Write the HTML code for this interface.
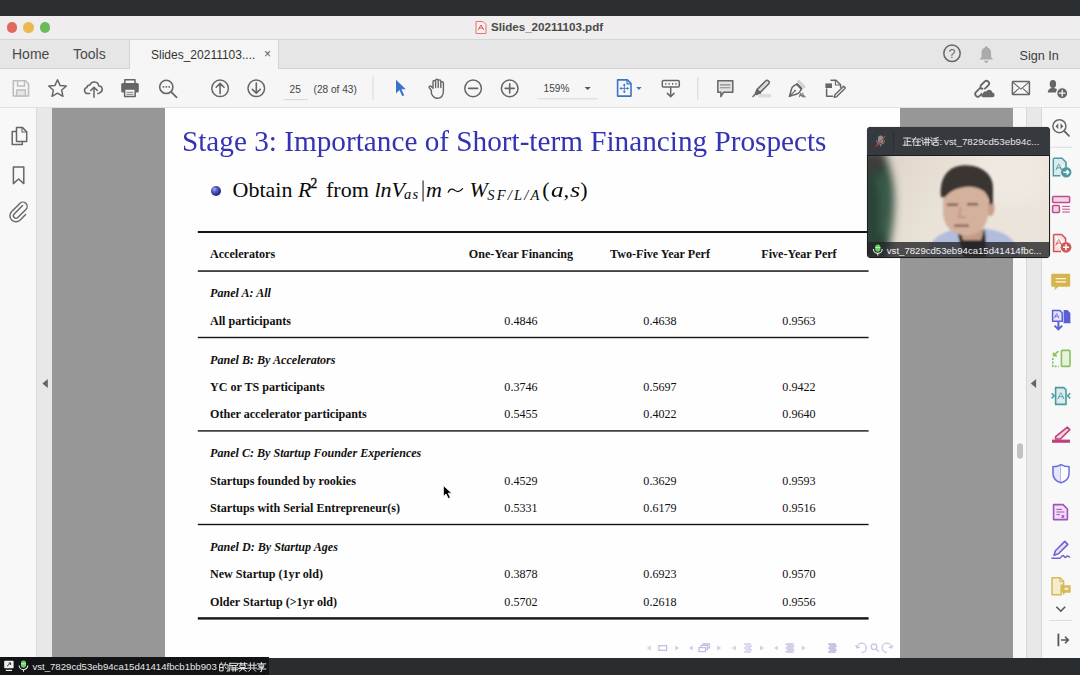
<!DOCTYPE html>
<html><head><meta charset="utf-8">
<style>
*{margin:0;padding:0;box-sizing:border-box}
html,body{width:1080px;height:675px;overflow:hidden;background:#2b2e31;font-family:"Liberation Sans",sans-serif}
.a{position:absolute}
svg{position:absolute;overflow:visible}
#topbar{left:0;top:0;width:1080px;height:16px;background:#2b2e31}
#titlebar{left:0;top:16px;width:1080px;height:24px;background:#efedee;border-bottom:1px solid #d6d4d5}
.tl{width:10.5px;height:10.5px;border-radius:50%;top:22.2px}
#tabbar{left:0;top:40px;width:1080px;height:29px;background:#e6e6e6;border-bottom:1px solid #d2d2d2}
#acttab{left:128.5px;top:40px;width:150px;height:29px;background:#f5f5f5;border-left:1px solid #d2d2d2;border-right:1px solid #d2d2d2}
#toolbar{left:0;top:69px;width:1080px;height:39px;background:#f6f6f6;border-bottom:1px solid #e0e0e0}
#content{left:0;top:108px;width:1080px;height:550px;background:#979797}
#leftpanel{left:0;top:108px;width:37px;height:550px;background:#f8f8f8;border-right:1px solid #dadada}
#leftstrip{left:37px;top:108px;width:15px;height:550px;background:#e8e8e8}
#page{left:165px;top:108px;width:735.4px;height:550px;background:#fefefe}
#rstrip1{left:1013px;top:108px;width:14px;height:550px;background:#f7f7f7}
#rstrip2{left:1025.8px;top:108px;width:16.2px;height:550px;background:#e8e8e8;border-left:1px solid #d8d8d8;border-right:1px solid #d8d8d8}
#rightpanel{left:1042px;top:108px;width:38px;height:550px;background:#f8f8f8}
#bottombar{left:0;top:658px;width:1080px;height:17px;background:#2a2d30}
#bbox{left:0;top:657px;width:268.5px;height:18px;background:#131416}
.serif{font-family:"Liberation Serif",serif}
.tb,.tn,.ti{position:absolute;font-family:"Liberation Serif",serif;font-size:12.1px;color:#111;white-space:nowrap;line-height:14px}
.tb{font-weight:bold}
.ti{font-weight:bold;font-style:italic}
.rule{position:absolute;left:198px;width:670.6px;height:1.4px;background:#141414}
.c1,.c2,.c3{width:120px;text-align:center}
.c1{left:461px}.c2{left:600px}.c3{left:739px}
.ui{position:absolute;white-space:nowrap;line-height:1;color:#444}
</style></head><body>
<div class="a" id="topbar"></div>
<div class="a" id="titlebar"></div>
<div class="a tl" style="left:6.5px;background:#e2675d"></div>
<div class="a tl" style="left:23px;background:#e9b84f"></div>
<div class="a tl" style="left:39.8px;background:#6cbb5a"></div>
<!-- pdf icon title -->
<svg style="left:475px;top:21px" width="12" height="13" viewBox="0 0 12 13"><path d="M1 0.5h7l3 3v9H1z" fill="#fbeeee" stroke="#d9776f" stroke-width="1"/><path d="M3 9 L6 4 L9 9 M4 7h4" fill="none" stroke="#d04a3c" stroke-width="0.9"/></svg>
<div class="ui" style="left:491px;top:21px;font-size:11.6px;font-weight:bold;color:#4a4a4a">Slides_20211103.pdf</div>

<div class="a" id="tabbar"></div>
<div class="a" id="acttab"></div>
<div class="ui" style="left:12px;top:46.5px;font-size:14px;color:#4a4a4a">Home</div>
<div class="ui" style="left:73px;top:46.5px;font-size:14px;color:#4a4a4a">Tools</div>
<div class="ui" style="left:151px;top:49px;font-size:12px;color:#333">Slides_20211103....</div>
<div class="ui" style="left:264px;top:47.5px;font-size:12px;color:#555">&#215;</div>
<div class="ui" style="left:1019.5px;top:50px;font-size:12.6px;color:#3c3c3c">Sign In</div>

<div class="a" id="toolbar"></div>
<div class="a" id="content"></div>
<div class="a" id="leftpanel"></div>
<div class="a" id="leftstrip"></div>
<div class="a" id="page"></div>
<div class="a" id="rstrip1"></div>
<div class="a" id="rstrip2"></div>
<div class="a" id="rightpanel"></div>
<div class="a" id="bottombar"></div>
<div class="a" id="bbox"></div>

<!--PANELS-->
<svg style="left:0;top:0" width="1080" height="675" viewBox="0 0 1080 675">
<g fill="none" stroke="#666" stroke-width="1.5" stroke-linejoin="round" stroke-linecap="round">
<!-- left: pages -->
<path d="M16.5 127.4h5.8l4.4 4.4v9.6h-10.2z"/>
<path d="M22 127.6v4.4h4.5" stroke-width="1.1"/>
<path d="M16.3 131.6h-4.1v12.8h10.1v-3"/>
<!-- bookmark -->
<path d="M13.4 167h10.4v16.6l-5.2-4.6-5.2 4.6z"/>
<!-- paperclip -->
<path d="M22.6 207.6l-8.4 8.4a2.5 2.5 0 0 0 3.6 3.6l8.1-8.1a4.3 4.3 0 0 0-6.1-6.1l-8.1 8.1a6 6 0 0 0 8.5 8.5l5.4-5.4" stroke-width="1.4" transform="translate(0,-2)"/>
<!-- right: zoom -->
<circle cx="1059.4" cy="126.2" r="6.5"/>
<path d="M1064.2 131l4.8 4.8" stroke-width="1.8"/>
</g>
<path d="M1058.3 123.2l-2.8 3 2.8 3zM1060.5 123.2l2.8 3-2.8 3z" fill="#666"/>
<rect x="1050.5" y="146.8" width="22" height="1" fill="#dcdcdc"/>
<!-- export pdf teal -->
<path d="M1053.4 158.2h8.6l4 4v5" fill="#dcecec" stroke="#4b9a9f" stroke-width="1.6" stroke-linejoin="round"/>
<path d="M1053.4 158.2v17.5h7" fill="none" stroke="#4b9a9f" stroke-width="1.6"/>
<rect x="1054.2" y="159" width="8" height="16" fill="#dcecec"/>
<path d="M1055.8 170.2C1057.6 167.2 1058.2 164.2 1058.8 164.2C1059.4 164.2 1060.0 167.2 1061.8 170.2M1056.1 168.5C1058.2 167.5 1059.4 167.5 1061.5 168.5" fill="none" stroke="#4b9a9f" stroke-width="0.9"/>
<circle cx="1066.2" cy="172.2" r="5.2" fill="#4b9a9f"/>
<path d="M1063.4 172.2h5M1066.6 170l2.2 2.2-2.2 2.2" fill="none" stroke="#fff" stroke-width="1.4"/>
<!-- organize pink -->
<rect x="1052.6" y="196.4" width="17" height="6.2" rx="1.2" fill="#efd7e6" stroke="#c2498a" stroke-width="1.5"/>
<rect x="1052.6" y="205.6" width="6.8" height="7" rx="1.2" fill="#efd7e6" stroke="#c2498a" stroke-width="1.5"/>
<path d="M1062.2 206.4h7.6M1062.2 209.2h7.6M1062.2 212h7.6" stroke="#c2498a" stroke-width="1"/>
<!-- create pdf red -->
<path d="M1053.6 234.4h8l4 4v3.5M1053.6 234.4v17.2h7.4" fill="#f6e2e2" stroke="#d05555" stroke-width="1.5"/>
<path d="M1055.8 245.4C1057.6 242.4 1058.2 239.4 1058.8 239.4C1059.4 239.4 1060.0 242.4 1061.8 245.4M1056.1 243.7C1058.2 242.7 1059.4 242.7 1061.5 243.7" fill="none" stroke="#d05555" stroke-width="0.9"/>
<circle cx="1066" cy="247.3" r="5.4" fill="#d05555"/>
<path d="M1063 247.3h6M1066 244.3v6" stroke="#fff" stroke-width="1.5"/>
<!-- comment yellow -->
<path d="M1052.4 273.8h16.6a1.2 1.2 0 0 1 1.2 1.2v10.5a1.2 1.2 0 0 1-1.2 1.2h-10.8l-3.5 3.5v-3.5h-2.3a1.2 1.2 0 0 1-1.2-1.2v-10.5a1.2 1.2 0 0 1 1.2-1.2z" fill="#d6b54e"/>
<path d="M1055.6 278.6h10.4M1055.6 281.8h10.4" stroke="#fff6d8" stroke-width="1.3"/>
<!-- combine blue -->
<path d="M1052.6 310.4h7.2l2.4 2.4v8.4h-9.6z" fill="#e4e4fa" stroke="#5b5fd6" stroke-width="1.5"/>
<path d="M1054.4 318.2C1055.8 315.9 1056.2 313.6 1056.7 313.6C1057.2 313.6 1057.6 315.9 1059.0 318.2M1054.6 316.9C1056.2 316.1 1057.2 316.1 1058.8 316.9" fill="none" stroke="#5b5fd6" stroke-width="0.8"/>
<path d="M1063.6 310h3.8l3 3v10.2h-6.8z" fill="#5b5fd6"/>
<path d="M1058.4 321v7.4M1054.6 325.6l3.8 3.8 3.8-3.8" fill="none" stroke="#5b5fd6" stroke-width="2"/>
<!-- organize pages green -->
<rect x="1061.4" y="350.4" width="8.6" height="16" rx="1" fill="#e6f2dc" stroke="#8ac15f" stroke-width="1.6"/>
<path d="M1052.8 358v8.4h6" fill="none" stroke="#8ac15f" stroke-width="1.6" stroke-dasharray="2 1.4"/>
<path d="M1058.4 351l-4.6 4.6M1053.6 352.4v3.4h3.4" fill="none" stroke="#8ac15f" stroke-width="1.6"/>
<!-- compress teal -->
<path d="M1055.6 387.6h8.2l2.2 2.2v14.6h-10.4z" fill="#dcecec" stroke="#4b9a9f" stroke-width="1.6" stroke-linejoin="round"/>
<path d="M1057.8 399.0C1059.7 395.9 1060.3 392.8 1060.9 392.8C1061.5 392.8 1062.1 395.9 1064.0 399.0M1058.1 397.3C1060.3 396.2 1061.5 396.2 1063.7 397.3" fill="none" stroke="#4b9a9f" stroke-width="0.9"/>
<path d="M1051.6 393.2l2.6 2.6-2.6 2.6M1070.2 393.2l-2.6 2.6 2.6 2.6" fill="none" stroke="#4b9a9f" stroke-width="1.5"/>
<!-- redact pink -->
<path d="M1067.4 427.2l2.4 2.4-9.4 9.4h-4.8v-2.4z" fill="#f0d2e0" stroke="#c2407a" stroke-width="1.6" stroke-linejoin="round"/>
<rect x="1052" y="439.6" width="18" height="3.2" fill="#c2407a"/>
<!-- shield -->
<path d="M1061 464.6c2.6 1.6 5.4 2.2 8 2.2v6.6c0 4.8-3.4 7.8-8 9.4-4.6-1.6-8-4.6-8-9.4v-6.6c2.6 0 5.4-.6 8-2.2z" fill="#e6e6fa" stroke="#6a6fe0" stroke-width="1.6"/>
<path d="M1061 465.2v17" stroke="#6a6fe0" stroke-width="0.8"/>
<path d="M1061 465.6c2.4 1.4 5 2 7.2 2v5.8c0 4.2-3 7-7.2 8.4z" fill="#fafaff"/>
<!-- form purple -->
<path d="M1053.6 504.6h9.4l4.4 4.4v10.6h-13.8z" fill="#f0e0f4" stroke="#a24fc0" stroke-width="1.6" stroke-linejoin="round"/>
<path d="M1056.4 509.4h5.6M1056.4 512h8M1056.4 514.6h3.6" stroke="#a24fc0" stroke-width="1"/>
<path d="M1061.6 515.2l2.6 2.6M1064.2 515.2l-2.6 2.6" stroke="#a24fc0" stroke-width="1.1"/>
<!-- sign purple -->
<path d="M1064.8 541.4l3 3-9.4 9.4-4.4 1.4 1.4-4.4z" fill="#e8e4fa" stroke="#7060d2" stroke-width="1.6" stroke-linejoin="round"/>
<path d="M1051.4 558.2h8.4c1.6 0 1.8-2.8 3.2-2.8 1.2 0 1 2 2.2 2 1 0 1.2-1.4 2.2-1.4.8 0 1 1 2.8 1" fill="none" stroke="#7060d2" stroke-width="1.5"/>
<!-- send for comment yellow -->
<path d="M1052 577.8h8l3.6 3.6v3.8h-2.4v9.6h-9.2z" fill="#f4eccc" stroke="#d4bb55" stroke-width="1.5" stroke-linejoin="round"/>
<path d="M1059.8 578v3.6h3.6" fill="none" stroke="#d4bb55" stroke-width="1"/>
<path d="M1062 585.2h8.6v7.6h-5.4l-2.2 2.4v-2.4h-1z" fill="#d4bb55"/>
<rect x="1064.6" y="587.6" width="3.6" height="2.4" fill="#f4eccc"/>
<!-- chevron -->
<path d="M1056.4 606.8l4.4 4.4 4.4-4.4" fill="none" stroke="#555" stroke-width="1.6"/>
<rect x="1049.5" y="620" width="23" height="1" fill="#dcdcdc"/>
<!-- exit arrow -->
<path d="M1058.4 633.6v12.6" stroke="#555" stroke-width="1.8"/>
<path d="M1061 640h7.2M1065 636.8l3.3 3.2-3.3 3.2" fill="none" stroke="#555" stroke-width="1.6"/>
<!-- collapse arrows -->
<path d="M47.8 379v9l-5.4-4.5z" fill="#666"/>
<path d="M1036.1 379v9l-5.3-4.5z" fill="#666"/>
<rect x="1017" y="443.3" width="6" height="15.4" rx="3" fill="#c2c2c2"/>
<!-- mouse cursor -->
<path d="M443.4 485.6v10.8l2.6-2.4 2.3 4.6 2.1-1-2.2-4.4h3.6z" fill="#000" stroke="#fff" stroke-width="0.8" stroke-linejoin="round"/>
</svg>
<!--/PANELS-->
<!--TOOLBAR-->
<svg style="left:0;top:0" width="1080" height="675" viewBox="0 0 1080 675">
<g fill="none" stroke="#666" stroke-width="1.6" stroke-linejoin="round" stroke-linecap="round">
<!-- save -->
<path d="M13.3 80.8h12.2l3 3v12.2h-15.2z" stroke="#bdbdbd"/>
<path d="M17.5 81v5h7v-5" stroke="#bdbdbd" stroke-width="1.4"/>
<rect x="16.6" y="90" width="8.8" height="5.8" fill="#e4e4e4" stroke="#bdbdbd" stroke-width="1.3"/>
<!-- star -->
<path d="M57.5 79.8l2.55 5.6 6.2.65-4.65 4.15 1.35 6.1-5.45-3.15-5.45 3.15 1.35-6.1-4.65-4.15 6.2-.65z" stroke-width="1.5"/>
<!-- cloud up -->
<path d="M89.6 93.4h-1.2a3 3 0 0 1-1.6-5.9 3.2 3.2 0 0 1 3.2-2.6 4.6 4.6 0 0 1 8.8 1 3.4 3.4 0 0 1 1.2 6.6 3.2 3.2 0 0 1-1.2.9h-1" stroke-width="1.5"/>
<path d="M94 97.2v-9.6M90.8 90.4l3.2-3.2 3.2 3.2" stroke-width="1.5"/>
<!-- printer -->
<path d="M124.8 83v-3.2h10.2v3.2" stroke-width="1.5"/>
<rect x="121.2" y="83" width="17.6" height="9.6" rx="1.6" fill="#666" stroke="none"/>
<rect x="124.6" y="89" width="10.6" height="7.4" fill="#f6f6f6" stroke-width="1.5"/>
<path d="M126.8 92.3h6.2M126.8 94.3h6.2" stroke-width="0.8"/>
<!-- search -->
<circle cx="166.3" cy="86.9" r="6.6" stroke-width="1.6"/>
<path d="M171.2 91.8l5.4 5.6" stroke-width="1.8"/>
<path d="M163.3 86.9h.3M166.2 86.9h.3M169.1 86.9h.3" stroke-width="1.6"/>
<!-- up / down -->
<circle cx="220.1" cy="88.3" r="8.3" stroke-width="1.5"/>
<path d="M220.1 93.6v-10M216.2 87.2l3.9-3.9 3.9 3.9" stroke-width="1.6"/>
<circle cx="256.3" cy="88.3" r="8.3" stroke-width="1.5"/>
<path d="M256.3 83v10M252.4 89.4l3.9 3.9 3.9-3.9" stroke-width="1.6"/>
<!-- hand -->
<path d="M431.4 90.5l-2.1-2.6a1.2 1.2 0 0 1 1.6-1.7l2.1 2V81.8a1.3 1.3 0 0 1 2.6 0v5.8-7.1a1.3 1.3 0 0 1 2.6 0v7.1-6.4a1.3 1.3 0 0 1 2.6 0v6.4-4.6a1.3 1.3 0 0 1 2.6 0v7.8c0 5.2-2.6 7.5-6.2 7.5-2.6 0-4.1-1.2-5.8-4.8z" stroke-width="1.4"/>
<!-- zoom out / in -->
<circle cx="473.1" cy="88.4" r="8.3" stroke-width="1.5"/>
<path d="M468.6 88.4h9" stroke-width="1.6"/>
<circle cx="509.7" cy="88.4" r="8.3" stroke-width="1.5"/>
<path d="M505.2 88.4h9M509.7 83.9v9" stroke-width="1.6"/>
<!-- measure -->
<rect x="662.3" y="80.6" width="17" height="6.4" rx="1.3" stroke-width="1.5"/>
<path d="M665.2 83.8h1.2M668.6 83.8h1.2M672 83.8h1.2M675.4 83.8h1.2" stroke-width="1.8" stroke-linecap="butt"/>
<path d="M670.7 87.6v9M667.4 93.4l3.3 3.3 3.3-3.3" stroke-width="1.5"/>
<!-- comment -->
<path d="M717.8 80.8h15v11.5h-9.3l-2.6 4.3v-4.3h-3.1z" fill="#e2e2e2" stroke-width="1.5"/>
<path d="M720.5 84.9h9.5M720.5 87.8h9.5" stroke-width="1.1" stroke="#888"/>
<!-- highlighter -->
<path d="M768.8 81.4a1.6 1.6 0 0 1 0 2.4l-8.8 8.8-3-3 8.8-8.8a1.6 1.6 0 0 1 2.4 0z" fill="#dcdcdc" stroke-width="1.5"/>
<path d="M757 89.6l-1.6 3.6 1.4 1.4 3.6-1.6" stroke-width="1.4" fill="#666"/>
<path d="M753 96.5l2.2-2.2" stroke-width="1.6"/>
<rect x="758.2" y="94" width="12.8" height="3.4" fill="#dcdcdc" stroke="none"/>
<!-- pen sign -->
<path d="M789.4 96.4l2.2-7.6c.5-2.2 2.4-3.6 5.4-4.6l4.4 4.4c-1 3-2.4 4.9-4.6 5.4z" stroke-width="1.5"/>
<path d="M789.8 96l4.4-4.4" stroke-width="1.1"/>
<circle cx="795" cy="90.8" r="1" fill="#666" stroke="none"/>
<path d="M797 84.2l4.4 4.4" stroke-width="2.2"/>
<path d="M798.6 81.4l5.4 5.4" stroke="#d2d2d2" stroke-width="3"/>
<path d="M799.4 96.8l1.3-3.8 1.3 3.8M800 95.4h1.4M802.8 93v3.8c1.6 0 1.8-1.6.6-1.8-1-.2-.6 1.8.4 1.8h1.6" stroke-width="0.9"/>
<!-- edit doc -->
<path d="M831 80.2h5l4.6 4.6v2.4" stroke-width="1.5"/>
<path d="M835.4 80.4v4.6h4.8" stroke-width="1.1"/>
<path d="M826.6 89v7.3h6" stroke-width="1.5"/>
<rect x="825.4" y="83.4" width="6.6" height="4.6" fill="#666" stroke="none"/>
<path d="M843.6 86.2l1.8 1.8-8.6 8.6-2.6.8.8-2.6z" stroke-width="1.4" fill="#f6f6f6"/>
<!-- link cloud -->
<g transform="translate(-1.6,0)">
<path d="M981.3 88.4l-3.7 3.7a2.6 2.6 0 0 0 3.7 3.7l2-2M986.5 88.7l3.4-3.4a2.6 2.6 0 0 0-3.7-3.7l-3.4 3.4a2.6 2.6 0 0 0 0 3.7M981.3 88.4a2.6 2.6 0 0 1 2.9.3" stroke-width="1.8"/>
<path d="M984.6 97.2h9.2a2.3 2.3 0 0 0 .2-4.6 3.3 3.3 0 0 0-6.2-1.1 2.3 2.3 0 0 0-3.2 2.3 1.7 1.7 0 0 0 0 3.4z" fill="#666" stroke="none"/>
</g>
<!-- mail -->
<rect x="1012.4" y="81.6" width="17" height="13" rx="0.6" stroke-width="1.5"/>
<path d="M1012.8 82.2l8.1 7 8.1-7M1012.8 94l5.6-5.2M1029 94l-5.6-5.2" stroke-width="1.1"/>
<!-- add user -->
<path d="M1047.8 92.6c0-3.2 2.4-4.6 5.1-4.6s5.1 1.4 5.1 4.6z" fill="#666" stroke="none"/>
<ellipse cx="1052.9" cy="84" rx="3.2" ry="4" fill="#666" stroke="none"/>
<circle cx="1062.2" cy="93.2" r="5.6" fill="#666" stroke="#f6f6f6" stroke-width="1.3"/>
<path d="M1059.4 93.2h5.6M1062.2 90.4v5.6" stroke="#f6f6f6" stroke-width="1.3"/>
</g>
<!-- blue cursor -->
<path d="M396 79.8v13.6l3.4-3.4 2.9 6.2 1.9-.9-2.8-6h4.4z" fill="#3a74c8"/>
<!-- blue page icon -->
<g fill="none" stroke="#3a74c8" stroke-width="1.6" stroke-linejoin="round">
<path d="M617.6 79.9h9.8l3.6 3.6v12.6h-13.4z"/>
<path d="M627 80.2v3.6h3.6" stroke-width="1.2"/>
<path d="M624.3 84.6v7.6M620.5 88.4h7.6" stroke-width="0.9"/>
</g>
<path d="M624.3 83.6l-1.6 2h3.2zM624.3 93.2l-1.6-2h3.2zM619.5 88.4l2-1.6v3.2zM629.1 88.4l-2-1.6v3.2z" fill="#3a74c8"/>
<path d="M636.2 87.1h5.4l-2.7 3z" fill="#3a74c8"/>
<!-- zoom dropdown -->
<path d="M584.6 86.9h6.2l-3.1 3z" fill="#555"/>
<!-- help / bell -->
<circle cx="952" cy="53.3" r="8.2" fill="none" stroke="#666" stroke-width="1.5"/>
<text x="952" y="57.6" text-anchor="middle" font-family="Liberation Sans" font-size="12.5" fill="#666">?</text>
<path d="M986.3 46.2c.8 0 1.3.6 1.3 1.3 2.3.7 3.5 2.7 3.5 5.4v4.4l2.1 2.3h-13.8l2.1-2.3v-4.4c0-2.7 1.2-4.7 3.5-5.4 0-.7.5-1.3 1.3-1.3z" fill="#aaaaaa"/>
<path d="M984.2 60.8a2.1 2.1 0 0 0 4.2 0z" fill="#aaaaaa"/>
<!-- separators -->
<rect x="372.5" y="76.5" width="1" height="23.5" fill="#d6d6d6"/>
<rect x="697.3" y="77" width="1" height="23" fill="#d6d6d6"/>
<rect x="283.5" y="99.3" width="24.5" height="0.8" fill="#cfcfcf"/>
<rect x="537" y="98.5" width="60.5" height="0.8" fill="#cfcfcf"/>
</svg>
<div class="ui" style="left:289.6px;top:84.5px;font-size:10.2px;color:#444">25</div>
<div class="ui" style="left:313.6px;top:84.5px;font-size:10.1px;color:#444">(28 of 43)</div>
<div class="ui" style="left:543.6px;top:84px;font-size:10.1px;color:#444">159%</div>
<!--/TOOLBAR-->
<!-- SLIDE -->
<div class="a serif" style="left:182.4px;top:123.5px;font-size:30px;line-height:34px;color:#3333b3;white-space:nowrap;transform:scaleX(0.9742);transform-origin:0 0">Stage 3: Importance of Short-term Financing Prospects</div>
<!--FORMULA-->
<div class="a" style="left:210.9px;top:185.9px;width:9.7px;height:9.7px;border-radius:50%;background:radial-gradient(circle at 35% 32%,#aab0f0 0,#5a5fc0 28%,#2e2f8c 62%,#1e1f66 100%)"></div>
<div class="a serif" style="left:232.6px;top:178.57px;font-size:22px;line-height:22px;color:#0a0a0a;white-space:nowrap;">Obtain</div>
<div class="a serif" style="left:298.0px;top:178.57px;font-size:22px;line-height:22px;color:#0a0a0a;white-space:nowrap;font-style:italic;">R</div>
<div class="a serif" style="left:310.4px;top:177.3px;font-size:13.6px;line-height:13.6px;color:#0a0a0a;white-space:nowrap;-webkit-text-stroke:0.35px #0a0a0a;">2</div>
<div class="a serif" style="left:326.0px;top:178.57px;font-size:22px;line-height:22px;color:#0a0a0a;white-space:nowrap;">from</div>
<div class="a serif" style="left:374.5px;top:178.57px;font-size:22px;line-height:22px;color:#0a0a0a;white-space:nowrap;font-style:italic;">lnV</div>
<div class="a serif" style="left:404.0px;top:187.06px;font-size:14.5px;line-height:14.5px;color:#0a0a0a;white-space:nowrap;font-style:italic;letter-spacing:1.3px">as</div>
<div class="a serif" style="left:426.0px;top:178.57px;font-size:22px;line-height:22px;color:#0a0a0a;white-space:nowrap;font-style:italic;">m</div>
<div class="a serif" style="left:469.5px;top:178.57px;font-size:22px;line-height:22px;color:#0a0a0a;white-space:nowrap;font-style:italic;">W</div>
<div class="a serif" style="left:487.2px;top:188.26px;font-size:14.5px;line-height:14.5px;color:#0a0a0a;white-space:nowrap;font-style:italic;letter-spacing:2.2px">SF/L/A</div>
<div class="a serif" style="left:542.2px;top:178.57px;font-size:22px;line-height:22px;color:#0a0a0a;white-space:nowrap;">(</div>
<div class="a serif" style="left:551.0px;top:178.57px;font-size:22px;line-height:22px;color:#0a0a0a;white-space:nowrap;font-style:italic;transform:scaleX(1.15);transform-origin:0 0">a</div>
<div class="a serif" style="left:563.5px;top:178.57px;font-size:22px;line-height:22px;color:#0a0a0a;white-space:nowrap;font-style:italic;">,</div>
<div class="a serif" style="left:570.0px;top:178.57px;font-size:22px;line-height:22px;color:#0a0a0a;white-space:nowrap;font-style:italic;transform:scaleX(1.2);transform-origin:0 0">s</div>
<div class="a serif" style="left:580.3px;top:178.57px;font-size:22px;line-height:22px;color:#0a0a0a;white-space:nowrap;">)</div>
<svg style="left:0;top:0" width="1080" height="675" viewBox="0 0 1080 675"><rect x="422.5" y="180.5" width="1.1" height="21" fill="#222"/><path d="M448.2 192.2c1.2-2.6 3-3.6 4.8-2.8 1.6.7 3.2 2.2 5 2.2 1.6 0 2.8-.9 4.6-3" fill="none" stroke="#111" stroke-width="1.25" stroke-linecap="round"/></svg>
<!--/FORMULA-->

<svg style="left:0;top:0" width="1080" height="675" viewBox="0 0 1080 675">
<g fill="#d3d3ec">
<path d="M650.8 645.5v5.1l-4.2-2.55z"/><path d="M675 645.5v5.1l4.4-2.55z"/>
<path d="M693 645.5v5.1l-4.2-2.55z"/><path d="M717 645.5v5.1l4.4-2.55z"/>
<path d="M735.8 645.5v5.1l-4.2-2.55z"/><path d="M760 645.5v5.1l4.4-2.55z"/>
<path d="M778 645.5v5.1l-4.2-2.55z"/><path d="M801.6 645.5v5.1l4.4-2.55z"/>
</g>
<g fill="none" stroke="#bdbde2" stroke-width="1.2">
<rect x="658.8" y="645.7" width="7.8" height="4.6"/>
<rect x="699" y="647.6" width="6.6" height="4"/>
<path d="M701 647.4v-2h6.4v4h-1.8M703 645.2v-1.4h6.4v4h-1.8"/>
</g>
<g fill="#c4c4e6">
<rect x="744" y="643.4" width="7" height="1.2"/><rect x="745.4" y="645.4" width="6.6" height="1.2"/><rect x="744" y="647.4" width="7" height="1.2"/><rect x="745.4" y="649.4" width="6.6" height="1.2"/><rect x="744" y="651.4" width="7" height="1.2"/>
</g>
<g fill="#b4b4de">
<rect x="785.4" y="643.4" width="8" height="1.2"/><rect x="786.8" y="645.4" width="7.6" height="1.2"/><rect x="785.4" y="647.4" width="8" height="1.2"/><rect x="786.8" y="649.4" width="7.6" height="1.2"/><rect x="785.4" y="651.4" width="8" height="1.2"/>
</g>
<g fill="#a9a9d8">
<rect x="828.2" y="643.4" width="7.6" height="1.3"/><rect x="829.4" y="645.4" width="7.4" height="1.3"/><rect x="828.2" y="647.4" width="7.6" height="1.3"/><rect x="829.4" y="649.4" width="7.4" height="1.3"/><rect x="828.2" y="651.4" width="7.6" height="1.3"/>
</g>
<g fill="none" stroke="#c6c6e6" stroke-width="1.3">
<path d="M857.2 647.6a4.6 4.6 0 1 1 4.4 4.8M855.6 645.4l1.6 2.6 2.6-1.2"/>
<circle cx="874" cy="646.8" r="2.8"/><path d="M876 648.8l2.8 3"/>
<path d="M891.4 647.6a4.6 4.6 0 1 0-4.4 4.8M893 645.4l-1.6 2.6-2.6-1.2"/>
</g>
</svg>
<!-- TABLE -->
<svg style="left:0;top:0" width="1080" height="675" viewBox="0 0 1080 675"><g fill="#141414">
<rect x="197.8" y="231" width="670.8" height="2"/>
<rect x="197.8" y="270.3" width="670.8" height="1.5"/>
<rect x="197.8" y="336.8" width="670.8" height="1.4"/>
<rect x="197.8" y="430.2" width="670.8" height="1.4"/>
<rect x="197.8" y="523.8" width="670.8" height="1.4"/>
<rect x="197.8" y="617.2" width="670.8" height="2.4"/>
</g></svg>

<div class="tb" style="left:210px;top:247px">Accelerators</div>
<div class="tb c1" style="top:247px">One-Year Financing</div>
<div class="tb c2" style="top:247px">Two-Five Year Perf</div>
<div class="tb c3" style="top:247px">Five-Year Perf</div>

<div class="ti" style="left:210px;top:285.5px">Panel A: All</div>
<div class="tb" style="left:210px;top:314px">All participants</div>
<div class="tn c1" style="top:314px">0.4846</div><div class="tn c2" style="top:314px">0.4638</div><div class="tn c3" style="top:314px">0.9563</div>

<div class="ti" style="left:210px;top:352.5px">Panel B: By Accelerators</div>
<div class="tb" style="left:210px;top:379.5px">YC or TS participants</div>
<div class="tn c1" style="top:379.5px">0.3746</div><div class="tn c2" style="top:379.5px">0.5697</div><div class="tn c3" style="top:379.5px">0.9422</div>
<div class="tb" style="left:210px;top:407px">Other accelerator participants</div>
<div class="tn c1" style="top:407px">0.5455</div><div class="tn c2" style="top:407px">0.4022</div><div class="tn c3" style="top:407px">0.9640</div>

<div class="ti" style="left:210px;top:445.5px">Panel C: By Startup Founder Experiences</div>
<div class="tb" style="left:210px;top:473.5px">Startups founded by rookies</div>
<div class="tn c1" style="top:473.5px">0.4529</div><div class="tn c2" style="top:473.5px">0.3629</div><div class="tn c3" style="top:473.5px">0.9593</div>
<div class="tb" style="left:210px;top:501px">Startups with Serial Entrepreneur(s)</div>
<div class="tn c1" style="top:501px">0.5331</div><div class="tn c2" style="top:501px">0.6179</div><div class="tn c3" style="top:501px">0.9516</div>

<div class="ti" style="left:210px;top:539.5px">Panel D: By Startup Ages</div>
<div class="tb" style="left:210px;top:567px">New Startup (1yr old)</div>
<div class="tn c1" style="top:567px">0.3878</div><div class="tn c2" style="top:567px">0.6923</div><div class="tn c3" style="top:567px">0.9570</div>
<div class="tb" style="left:210px;top:594.5px">Older Startup (&gt;1yr old)</div>
<div class="tn c1" style="top:594.5px">0.5702</div><div class="tn c2" style="top:594.5px">0.2618</div><div class="tn c3" style="top:594.5px">0.9556</div>
<!--VIDEO-->
<div class="a" style="left:867px;top:127.3px;width:183px;height:131px;border-radius:4px;background:#1c1d1f;overflow:hidden;box-shadow:0 0 1px rgba(0,0,0,.5)">
 <div class="a" style="left:0;top:0;width:183px;height:27.5px;background:#36393d"></div>
 <div class="a" style="left:25.6px;top:3.5px;width:1px;height:20px;background:#2c2f32"></div>
 <svg style="left:1px;top:28.5px;overflow:hidden" width="181" height="101" viewBox="868 155.8 181 101">
<defs>
<filter id="b1" x="-50%" y="-50%" width="200%" height="200%"><feGaussianBlur stdDeviation="1.1"/></filter>
<filter id="b2" x="-50%" y="-50%" width="200%" height="200%"><feGaussianBlur stdDeviation="4"/></filter>
<filter id="b3" x="-50%" y="-50%" width="200%" height="200%"><feGaussianBlur stdDeviation="9"/></filter>
<linearGradient id="wall" x1="0" y1="0" x2="1" y2="0.3"><stop offset="0" stop-color="#ddd3c6"/><stop offset="0.5" stop-color="#e9e2d8"/><stop offset="1" stop-color="#ebe4da"/></linearGradient>
</defs>
<rect x="868" y="155.8" width="181" height="101" fill="url(#wall)"/>
<ellipse cx="1010" cy="175" rx="40" ry="30" fill="#efe9e1" filter="url(#b3)"/>
<g filter="url(#b2)">
<path d="M860 150h24c5 15 10 30 10 50s-3 40-8 60h-26z" fill="#2c4438"/>
<rect x="860" y="150" width="24" height="20" fill="#3c3d3b"/>
<path d="M880 175c4 10 6 30 4 60" stroke="#456a56" stroke-width="5" fill="none"/>
</g>
<g filter="url(#b1)">
<path d="M926 257c2-14 10-22 22-26l14-3h22l14 3c12 4 20 12 22 26z" fill="#b2bcdc"/>
<path d="M957 230l6 27h24l-2-27z" fill="#2e2a2c"/>
<path d="M960 230l3 10h18l3-10z" fill="#c29c88"/>
<ellipse cx="990.5" cy="208" rx="4" ry="8" fill="#c8a08a"/>
<path d="M943 192c0-6 4-9 12-10 10-1 22-1 30 3 3 2 3 6 3 12v16c0 12-8 22-22 22-15 0-23-10-23-24z" fill="#d4b19c"/>

<path d="M941 197c-2-18 6-32 24-32 20 0 29 12 28 24v14l-3 2c-1-7-3-11-6-14-6-4-14-5-20-4-8 1-14 4-19 10z" fill="#3b3531"/>
<path d="M947 204.5h11" stroke="#6a5448" stroke-width="2.2" fill="none"/>
<path d="M967 204h11" stroke="#6a5448" stroke-width="2.2" fill="none"/>
<path d="M961 207l-2 10h7" stroke="#b89080" stroke-width="1.5" fill="none"/>
<path d="M954 225.5h15" stroke="#8a625a" stroke-width="2.4" fill="none"/>
</g>
<rect x="868" y="241.8" width="181" height="16" fill="rgba(38,38,40,.8)"/>
</svg>
</div>
<div class="ui" style="left:939.6px;top:136.6px;font-size:9.8px;color:#e6e6e6">:</div><div class="ui" style="left:944px;top:136.6px;font-size:9.75px;color:#e6e6e6">vst_7829cd53eb94c...</div>
<div class="ui" style="left:886.8px;top:245.6px;font-size:9.6px;color:#f2f2f2">vst_7829cd53eb94ca15d41414fbc...</div>
<div class="ui" style="left:32.4px;top:662.3px;font-size:9.62px;color:#e8e8e8">vst_7829cd53eb94ca15d41414fbcb1bb903</div>
<svg style="left:0;top:0" width="1080" height="675" viewBox="0 0 1080 675">
<g fill="none" stroke="#e6e6e6" stroke-width="1.05" stroke-linecap="square"><path transform="translate(902.80,137) scale(0.890)" d="M1 1.2h8M5 1.2v8M5 5h3.6M2.4 4.4v4.8M0.4 9.2h9.2"/><path transform="translate(911.88,137) scale(0.890)" d="M0.4 2.4h9.2M4.2 0.4L0.6 5.6M2.2 4v5.6M4.6 5.4h4.8M6.8 3.2v6.2M4 9.4h5.8"/><path transform="translate(920.96,137) scale(0.890)" d="M1.2 0.6l1 1.2M0.4 3.6h1.8v5.2l1.2-1M4 3h5.8M3.6 6h6.2M5.6 0.8v8.8M8.2 0.8v8.8"/><path transform="translate(930.03,137) scale(0.890)" d="M1.2 0.6l1 1.2M0.4 3.6h1.8v5.2l1.2-1M9.2 0.6l-5 1.2M3.8 3.6h6M6.8 1.6v4.2M4.6 6h4.6v3.4h-4.6z"/></g>
<g fill="none" stroke="#e8e8e8" stroke-width="1.05" stroke-linecap="square"><path transform="translate(219.40,662.4) scale(0.920)" d="M2.2 0.4l-0.8 1.6M0.8 2h3.2v7.2H0.8zM0.8 5.6h3.2M6.6 0.4l-1 2.6M5.8 2.6h3.6v6.6l-1 0.4M6.4 5l1 1.6"/><path transform="translate(228.78,662.4) scale(0.920)" d="M1.2 1h8.2v2.4H1.2M1.2 1v4.6l-0.9 4M3.6 4.4l0.8 1M7.6 4.4l-0.8 1M2.6 6h7.2M2.6 8h7.2M4.6 6v3.6M7.2 6v3.6"/><path transform="translate(238.17,662.4) scale(0.920)" d="M0.4 1.4h9.2M3 0.3v2.2M7 0.3v2.2M2.4 3h5.2v2.6H2.4zM0.4 6.6h9.2M5 5.6v1.2L1.4 9.6M5 6.8l3.8 2.8"/><path transform="translate(247.55,662.4) scale(0.920)" d="M0.4 3h9.2M3 0.4v5.8M7 0.4v5.8M0.4 6.2h9.2M3.2 7.6L1.2 9.6M6.8 7.6l2 2"/><path transform="translate(256.94,662.4) scale(0.920)" d="M5 0.2v1.2M0.4 1.6h9.2M2.6 2.8h4.8v2H2.6zM3 5.6h4L5 7M0.4 7.2h9.2M5 7.2v2.6l-1 0.2"/></g>
<!-- muted mic -->
<rect x="878" y="135.6" width="5.2" height="7.4" rx="2.6" fill="#8a8d90"/>
<path d="M876.6 140.4a3.9 3.9 0 0 0 7.8 0M880.5 144.4v2" fill="none" stroke="#8a8d90" stroke-width="1"/>
<path d="M875.8 146.6l9.6-10.6" stroke="#d0453a" stroke-width="1.1"/>
<!-- green mic overlay -->
<rect x="875.2" y="244.6" width="5.2" height="7" rx="2.6" fill="#5ed35e"/>
<path d="M873.4 249a4.4 4.4 0 0 0 8.8 0M877.8 253.4v2.2" fill="none" stroke="#f0f0f0" stroke-width="1.1"/>
<path d="M875.2 247.6h5.2" stroke="#f0f0f0" stroke-width="0.8"/>
<!-- bottom bar icons -->
<rect x="4.2" y="660.8" width="9.4" height="7.4" rx="0.8" fill="#f0f0f0"/>
<rect x="5.8" y="669.8" width="6.2" height="1.2" fill="#f0f0f0"/>
<path d="M7 666.2l3.6-3.2M8.6 663h2v2" fill="none" stroke="#222" stroke-width="0.9"/>
<rect x="21" y="660.6" width="5" height="7.2" rx="2.5" fill="#5ed35e"/>
<path d="M19.2 665.4a4.3 4.3 0 0 0 8.6 0M23.5 669.8v2" fill="none" stroke="#f0f0f0" stroke-width="1.1"/>
<path d="M21 663.8h5" stroke="#f0f0f0" stroke-width="0.8"/>
</svg>
<!--/VIDEO-->
</body></html>
